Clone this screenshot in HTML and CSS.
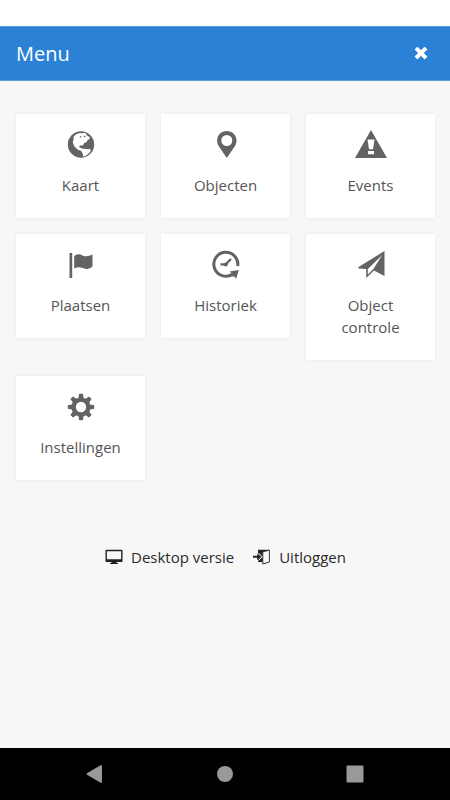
FILE: index.html
```html
<!DOCTYPE html>
<html lang="nl">
<head>
<meta charset="utf-8">
<meta name="viewport" content="width=device-width, initial-scale=1">
<title>Menu</title>
<link rel="stylesheet" href="styles.css">
</head>
<body>
<header class="header">
  <h1 class="title">Menu</h1>
  <button class="close" type="button" aria-label="Sluiten">
    <svg width="14" height="14" viewBox="0 0 14 14"><path d="M3.4 2.4L10.6 9.6M10.6 2.4L3.4 9.6" stroke="currentColor" stroke-width="4" stroke-linecap="square"/></svg>
  </button>
</header>
<main class="main">
  <nav class="grid" aria-label="Menu">
    <a class="card" href="#kaart">
      <svg class="icon" viewBox="0 0 32 28"><circle cx="16" cy="14.5" r="13.2"/><path class="cut" d="M8.5 7L11 4.2L14 3.2L20.5 3L22 5.5L24.5 7L24.7 9L22.5 10L21.8 12L19.3 13L17.5 15.8L15.8 15.2L13.8 16.4L16.3 18L18.8 18.7L25.8 19.2L25.2 22L23 24L20.2 26.3L18.3 26.5L17.8 23.8L16 20.8L12.8 19.7L9.2 16.2L7.7 12L8.7 9.5Z"/><path d="M14.8 6.2h1.5v1.4h-1.5zM18.6 6.2l1.8-.6v1.1l-1.6.6zM14.5 16l2.8 1.8 1.5-1.2-.4 2-2.4-.3z"/></svg>
      <span>Kaart</span>
    </a>
    <a class="card" href="#objecten">
      <svg class="icon" viewBox="0 0 32 28"><path fill-rule="evenodd" d="M16.8 1C11.4 1 7.1 5.1 7.1 10.4C7.1 13 8 14.8 9.3 17L16.8 28L24.3 17C25.7 14.8 26.5 13 26.5 10.4C26.5 5.1 22.2 1 16.8 1ZM16.8 5A5.5 5.5 0 1 1 16.8 16A5.5 5.5 0 1 1 16.8 5Z"/></svg>
      <span>Objecten</span>
    </a>
    <a class="card" href="#events">
      <svg class="icon" viewBox="0 0 32 28"><path d="M16 0L32 28H0Z"/><path class="cut" d="M12.5 9.5H19.5L18 19.2H14ZM13 21H19V24.3H13Z"/></svg>
      <span>Events</span>
    </a>
    <a class="card" href="#plaatsen">
      <svg class="icon" viewBox="0 0 32 28"><path d="M4.5 3H7.2V28H4.5ZM9.2 6C12 3.8 14.8 4 17.4 5.4C20.8 7 23.7 6.4 27.5 4.6V16.2C25.2 18.8 22 19.9 18.5 18.2C15 16.7 12 16.8 9.2 18.5Z"/></svg>
      <span>Plaatsen</span>
    </a>
    <a class="card" href="#historiek">
      <svg class="icon" viewBox="0 0 32 28"><path class="line" d="M27.7 16A12 12 0 1 0 22.5 24.2" stroke-width="3"/><path d="M19.6 21.4L28.8 20L26.2 28.8L24.2 26.4L21.6 26.6L20.8 25L22.2 23.8Z"/><path class="line" d="M10.5 14.3L15.5 14.5L21 9" stroke-width="2.3"/><circle cx="15.8" cy="14.5" r="2"/></svg>
      <span>Historiek</span>
    </a>
    <a class="card" href="#object-controle">
      <svg class="icon" viewBox="0 0 32 28"><path d="M29.5 1L3.2 17.3L3.6 18.6L11.2 19V28L19 20.6L29.5 26ZM27.3 5L18.2 19.2L12.8 24.6V18.9Z" fill-rule="evenodd"/></svg>
      <span>Object controle</span>
    </a>
    <a class="card" href="#instellingen">
      <svg class="icon" viewBox="-16 -15 32 28"><g id="teeth"><path d="M-2.6 -9L-1.8 -13.2H1.8L2.6 -9V9L1.8 13.2H-1.8L-2.6 9ZM-9 -2.6L-13.2 -1.8V1.8L-9 2.6H9L13.2 1.8V-1.8L9 -2.6Z"/></g><use href="#teeth" transform="rotate(45)"/><circle r="9.6"/><circle class="cut" r="5.2"/></svg>
      <span>Instellingen</span>
    </a>
  </nav>
  <div class="links">
    <a class="link" href="#desktop">
      <svg class="small" viewBox="0 0 18 16"><path fill-rule="evenodd" d="M1 .8H17L17.5 1.3V12.5L17 13H11.5V14H13V15H5V14H6.5V13H1L.5 12.5V1.3ZM1.9 2.2V10.2H16.1V2.2Z"/></svg>
      <span>Desktop versie</span>
    </a>
    <a class="link" href="#uitloggen">
      <svg class="small" viewBox="0 0 18 16"><path d="M5 .8H16V1.5L9.6 3V13H5V10.8L8.3 7.7L5 4.6Z"/><path class="line" d="M9.8 2.8L16.4 1.2V13L9.8 15Z" stroke-width=".9"/><path d="M0 6.8H4.2V4.4L8.2 7.8L4.2 11.2V8.8H0Z"/><path class="halo" d="M5.4 4L9.2 7.8L5.4 11.6"/></svg>
      <span>Uitloggen</span>
    </a>
  </div>
</main>
<footer class="system">
  <button type="button" aria-label="Terug"><svg width="18" height="18" viewBox="0 0 18 18"><path d="M1 8.2L14.5 .3Q16 0 16 1.5V16.5Q16 18 14.5 17.7L1 9.8Q0 9 1 8.2Z"/></svg></button>
  <button type="button" aria-label="Startscherm"><svg width="18" height="18" viewBox="0 0 18 18"><circle cx="9" cy="9" r="8"/></svg></button>
  <button type="button" aria-label="Overzicht"><svg width="18" height="18" viewBox="0 0 18 18"><rect x="0.5" y="0.5" width="17" height="17" rx="1"/></svg></button>
</footer>
</body>
</html>
```
FILE: styles.css
```css
* {
  box-sizing: border-box;
}

body {
  margin: 0;
  min-height: 100vh;
  padding-top: 26px;
  display: flex;
  flex-direction: column;
  background: #fff;
  color: #333;
  font: 15px/22px "Open Sans", sans-serif;
}

button {
  border: 0;
  padding: 0;
  background: none;
  color: inherit;
  display: flex;
}

a {
  color: inherit;
  text-decoration: none;
}

.header {
  display: flex;
  align-items: center;
  justify-content: space-between;
  padding: 16px 22px 16px 16px;
  border: 1px solid #5b9cdc;
  border-width: 1px 0;
  background: #2a81d5;
  color: #fff;
}

.title {
  margin: 0;
  font-size: 20px;
  line-height: 21px;
  font-weight: 400;
}

.main {
  flex: 1;
  padding: 33px 15px 32px 16px;
  background: #f7f7f7;
}

.grid {
  display: grid;
  grid-template-columns: repeat(3, 1fr);
  gap: 16px;
  align-items: start;
}

.card {
  display: flex;
  flex-direction: column;
  align-items: center;
  gap: 16px;
  padding: 16px 20px 22px;
  background: #fff;
  box-shadow: 0 0 4px rgba(0, 0, 0, 0.06);
  color: #555;
  text-align: center;
}

.icon {
  width: 32px;
  height: 28px;
  fill: #636363;
  stroke: none;
  overflow: visible;
}

.icon .cut {
  fill: #fff;
}

.line {
  fill: none;
  stroke: #636363;
}

.links {
  display: flex;
  justify-content: center;
  gap: 19px;
  margin-top: 66px;
  color: #2b2b2b;
}

.link {
  display: flex;
  align-items: center;
  gap: 8px;
}

.small {
  width: 18px;
  height: 16px;
  fill: #222;
}

.small .line {
  fill: #f7f7f7;
  stroke: #222;
}

.small .halo {
  fill: none;
  stroke: #f7f7f7;
}

.system {
  display: flex;
  justify-content: space-around;
  align-items: center;
  height: 52px;
  padding: 0 30px;
  background: #000;
}

.system svg {
  fill: #999;
}
```
